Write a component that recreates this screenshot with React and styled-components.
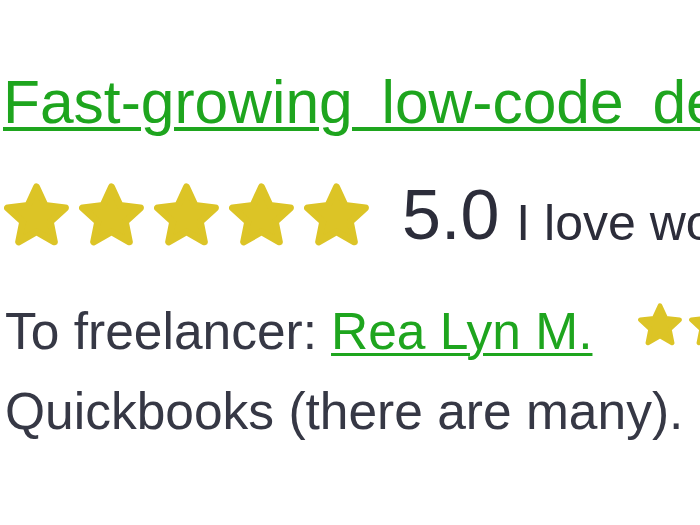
import React from "react";
import styled, { createGlobalStyle } from "styled-components";

const GlobalStyle = createGlobalStyle`
  html, body {
    margin: 0;
    padding: 0;
    background: #ffffff;
    overflow: hidden;
  }
  body {
    font-family: "Liberation Sans", Arial, Helvetica, sans-serif;
  }
`;

// fat five-point star, tips rounded by a round-joined stroke
const STAR_POINTS =
  "50,9 62.34,36.01 91.85,39.4 69.97,59.49 75.86,88.6 50,74 24.14,88.6 30.03,59.49 8.15,39.4 37.66,36.01";

function Star({ size }) {
  return (
    <StarSvg width={size} height={size * 0.97} viewBox="3 3.5 94 91" aria-hidden="true">
      <polygon points={STAR_POINTS} />
    </StarSvg>
  );
}

function StarRow({ size, gap, offset }) {
  return (
    <Stars $gap={gap} $offset={offset}>
      {[0, 1, 2, 3, 4].map((i) => (
        <Star key={i} size={size} />
      ))}
    </Stars>
  );
}

export default function App() {
  return (
    <>
      <GlobalStyle />
      <Page>
        <Title href="#">Fast-growing low-code development company</Title>

        <RatingRow>
          <StarRow size={65} gap={10} />
          <Score>5.0</Score>
          <Comment>I love working with Rea Lyn</Comment>
        </RatingRow>

        <FreelancerRow>
          <Label>To freelancer:</Label>
          <Name href="#">Rea Lyn M.</Name>
          <StarRow size={44} gap={7} offset={2} />
        </FreelancerRow>

        <Body>
          Quickbooks (there are many). She was very quick to respond and
        </Body>
      </Page>
    </>
  );
}

const Page = styled.div`
  width: 700px;
  height: 525px;
  padding: 70px 0 0 3px;
  box-sizing: border-box;
  white-space: nowrap;
  overflow: hidden;
  color: #363845;
`;

const Title = styled.a`
  display: block;
  font-size: 60.5px;
  line-height: 64px;
  word-spacing: 12px;
  color: #1ea51e;
  text-decoration: underline;
  text-decoration-thickness: 4px;
  text-underline-offset: 4px;
`;

const RatingRow = styled.div`
  display: flex;
  align-items: flex-start;
  height: 63px;
  margin-top: 49px;
  padding-left: 1px;
`;

const Stars = styled.div`
  display: flex;
  gap: ${(p) => p.$gap}px;
  margin-top: ${(p) => p.$offset || 0}px;
  flex-shrink: 0;
`;

const StarSvg = styled.svg`
  display: block;
  fill: #dcc426;
  stroke: #dcc426;
  stroke-width: 10;
  stroke-linejoin: round;
`;

const Score = styled.span`
  font-size: 70px;
  line-height: 70px;
  margin: -3px 0 0 33px;
  color: #2c2d3a;
`;

const Comment = styled.span`
  font-size: 50px;
  line-height: 50px;
  margin: 15px 0 0 17px;
  color: #2c2d3a;
`;

const FreelancerRow = styled.div`
  display: flex;
  align-items: flex-start;
  margin-top: 55px;
  padding-left: 2px;
  font-size: 51.5px;
  line-height: 60px;
`;

const Label = styled.span`
  margin-right: 14px;
`;

const Name = styled.a`
  color: #1ea51e;
  text-decoration: underline;
  text-decoration-thickness: 3px;
  text-underline-offset: 4px;
  margin-right: 46px;
`;

const Body = styled.div`
  margin-top: 20px;
  padding-left: 2px;
  font-size: 51.5px;
  line-height: 60px;
`;
